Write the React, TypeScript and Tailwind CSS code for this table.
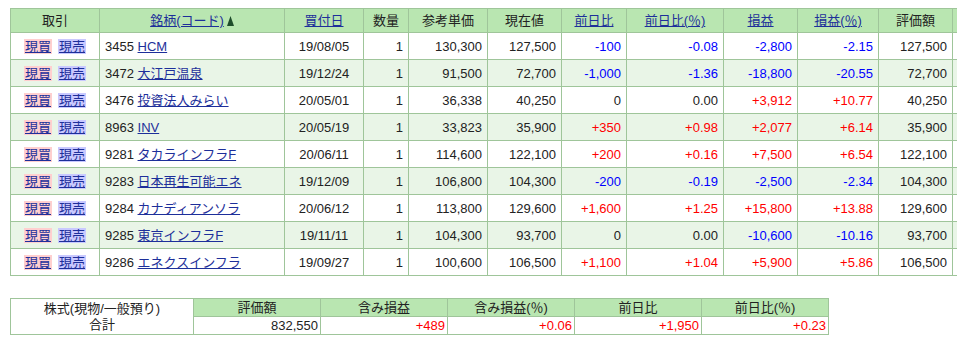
import React from 'react';

type Row = {
  code: string;
  name: string;
  date: string;
  qty: string;
  ref: string;
  price: string;
  chg: string;
  chgPct: string;
  pl: string;
  plPct: string;
  value: string;
};

const rows: Row[] = [
  { code: '3455', name: 'HCM', date: '19/08/05', qty: '1', ref: '130,300', price: '127,500', chg: '-100', chgPct: '-0.08', pl: '-2,800', plPct: '-2.15', value: '127,500' },
  { code: '3472', name: '大江戸温泉', date: '19/12/24', qty: '1', ref: '91,500', price: '72,700', chg: '-1,000', chgPct: '-1.36', pl: '-18,800', plPct: '-20.55', value: '72,700' },
  { code: '3476', name: '投資法人みらい', date: '20/05/01', qty: '1', ref: '36,338', price: '40,250', chg: '0', chgPct: '0.00', pl: '+3,912', plPct: '+10.77', value: '40,250' },
  { code: '8963', name: 'INV', date: '20/05/19', qty: '1', ref: '33,823', price: '35,900', chg: '+350', chgPct: '+0.98', pl: '+2,077', plPct: '+6.14', value: '35,900' },
  { code: '9281', name: 'タカラインフラF', date: '20/06/11', qty: '1', ref: '114,600', price: '122,100', chg: '+200', chgPct: '+0.16', pl: '+7,500', plPct: '+6.54', value: '122,100' },
  { code: '9283', name: '日本再生可能エネ', date: '19/12/09', qty: '1', ref: '106,800', price: '104,300', chg: '-200', chgPct: '-0.19', pl: '-2,500', plPct: '-2.34', value: '104,300' },
  { code: '9284', name: 'カナディアンソラ', date: '20/06/12', qty: '1', ref: '113,800', price: '129,600', chg: '+1,600', chgPct: '+1.25', pl: '+15,800', plPct: '+13.88', value: '129,600' },
  { code: '9285', name: '東京インフラF', date: '19/11/11', qty: '1', ref: '104,300', price: '93,700', chg: '0', chgPct: '0.00', pl: '-10,600', plPct: '-10.16', value: '93,700' },
  { code: '9286', name: 'エネクスインフラ', date: '19/09/27', qty: '1', ref: '100,600', price: '106,500', chg: '+1,100', chgPct: '+1.04', pl: '+5,900', plPct: '+5.86', value: '106,500' },
];

// sign decides the colour: plus red, minus blue, zero stays black
const tone = (v: string) =>
  v.startsWith('+') ? 'text-[#ff0000]' : v.startsWith('-') ? 'text-[#0000ff]' : 'text-[#222]';

const th = 'border border-[#9fc59a] bg-[#b9e6b1] font-normal text-center h-[24px] px-1';
const td = 'border border-[#9fc59a] h-[27px] px-[5px]';
const link = 'text-[#1d2f9a] underline';

const Hd: React.FC<{ label: string; linked?: boolean }> = ({ label, linked }) => (
  <th className={th}>{linked ? <a href="#" className={link}>{label}</a> : label}</th>
);

export default function App() {
  return (
    <div className="w-[957px] h-[340px] overflow-hidden bg-white text-[13px] leading-[15px] text-[#222] font-['Liberation_Sans','Noto_Sans_CJK_JP',sans-serif]">
      <div className="pt-[8px] pl-[10px]">
        <table className="table-fixed border-collapse w-[1002px]">
          <colgroup>
            <col className="w-[89px]" />
            <col className="w-[185px]" />
            <col className="w-[79px]" />
            <col className="w-[45px]" />
            <col className="w-[79px]" />
            <col className="w-[74px]" />
            <col className="w-[65px]" />
            <col className="w-[97px]" />
            <col className="w-[74px]" />
            <col className="w-[81px]" />
            <col className="w-[74px]" />
            <col className="w-[60px]" />
          </colgroup>
          <thead>
            <tr>
              <Hd label="取引" />
              <th className={th}>
                <a href="#" className={link}>銘柄(コード)</a>
                <svg className="inline-block ml-[3px] -mt-[2px] align-middle" width="7" height="10" viewBox="0 0 7 10">
                  <path d="M3.5 0 L7 10 L0 10 Z" fill="#1e4d2b" />
                </svg>
              </th>
              <Hd label="買付日" linked />
              <Hd label="数量" />
              <Hd label="参考単価" />
              <Hd label="現在値" />
              <Hd label="前日比" linked />
              <Hd label="前日比(％)" linked />
              <Hd label="損益" linked />
              <Hd label="損益(％)" linked />
              <Hd label="評価額" />
              <Hd label="" />
            </tr>
          </thead>
          <tbody>
            {rows.map((r, i) => (
              <tr key={r.code} className={i % 2 === 1 ? 'bg-[#e9f5e7]' : 'bg-white'}>
                <td className={`${td} text-center`}>
                  <a href="#" className={`${link} bg-[#ffcfcf] px-px`}>現買</a>
                  <a href="#" className={`${link} bg-[#c9c9ff] px-px ml-[6px]`}>現売</a>
                </td>
                <td className={td}>
                  {r.code} <a href="#" className={link}>{r.name}</a>
                </td>
                <td className={`${td} text-center`}>{r.date}</td>
                <td className={`${td} text-right`}>{r.qty}</td>
                <td className={`${td} text-right`}>{r.ref}</td>
                <td className={`${td} text-right`}>{r.price}</td>
                <td className={`${td} text-right ${tone(r.chg)}`}>{r.chg}</td>
                <td className={`${td} text-right ${tone(r.chgPct)}`}>{r.chgPct}</td>
                <td className={`${td} text-right ${tone(r.pl)}`}>{r.pl}</td>
                <td className={`${td} text-right ${tone(r.plPct)}`}>{r.plPct}</td>
                <td className={`${td} text-right`}>{r.value}</td>
                <td className={td}></td>
              </tr>
            ))}
          </tbody>
        </table>

        <table className="table-fixed border-collapse w-[818px] mt-[22px]">
          <colgroup>
            <col className="w-[183px]" />
            <col className="w-[127px]" />
            <col className="w-[127px]" />
            <col className="w-[127px]" />
            <col className="w-[127px]" />
            <col className="w-[127px]" />
          </colgroup>
          <tbody>
            <tr>
              <td rowSpan={2} className="border border-[#9fc59a] text-center leading-[16px]">
                株式(現物/一般預り)
                <br />
                合計
              </td>
              {['評価額', '含み損益', '含み損益(％)', '前日比', '前日比(％)'].map((h) => (
                <td key={h} className="border border-[#9fc59a] bg-[#b9e6b1] text-center h-[18px]">{h}</td>
              ))}
            </tr>
            <tr>
              <td className="border border-[#9fc59a] text-right px-[2px] h-[18px]">832,550</td>
              <td className="border border-[#9fc59a] text-right px-[2px] text-[#ff0000]">+489</td>
              <td className="border border-[#9fc59a] text-right px-[2px] text-[#ff0000]">+0.06</td>
              <td className="border border-[#9fc59a] text-right px-[2px] text-[#ff0000]">+1,950</td>
              <td className="border border-[#9fc59a] text-right px-[2px] text-[#ff0000]">+0.23</td>
            </tr>
          </tbody>
        </table>
      </div>
    </div>
  );
}
